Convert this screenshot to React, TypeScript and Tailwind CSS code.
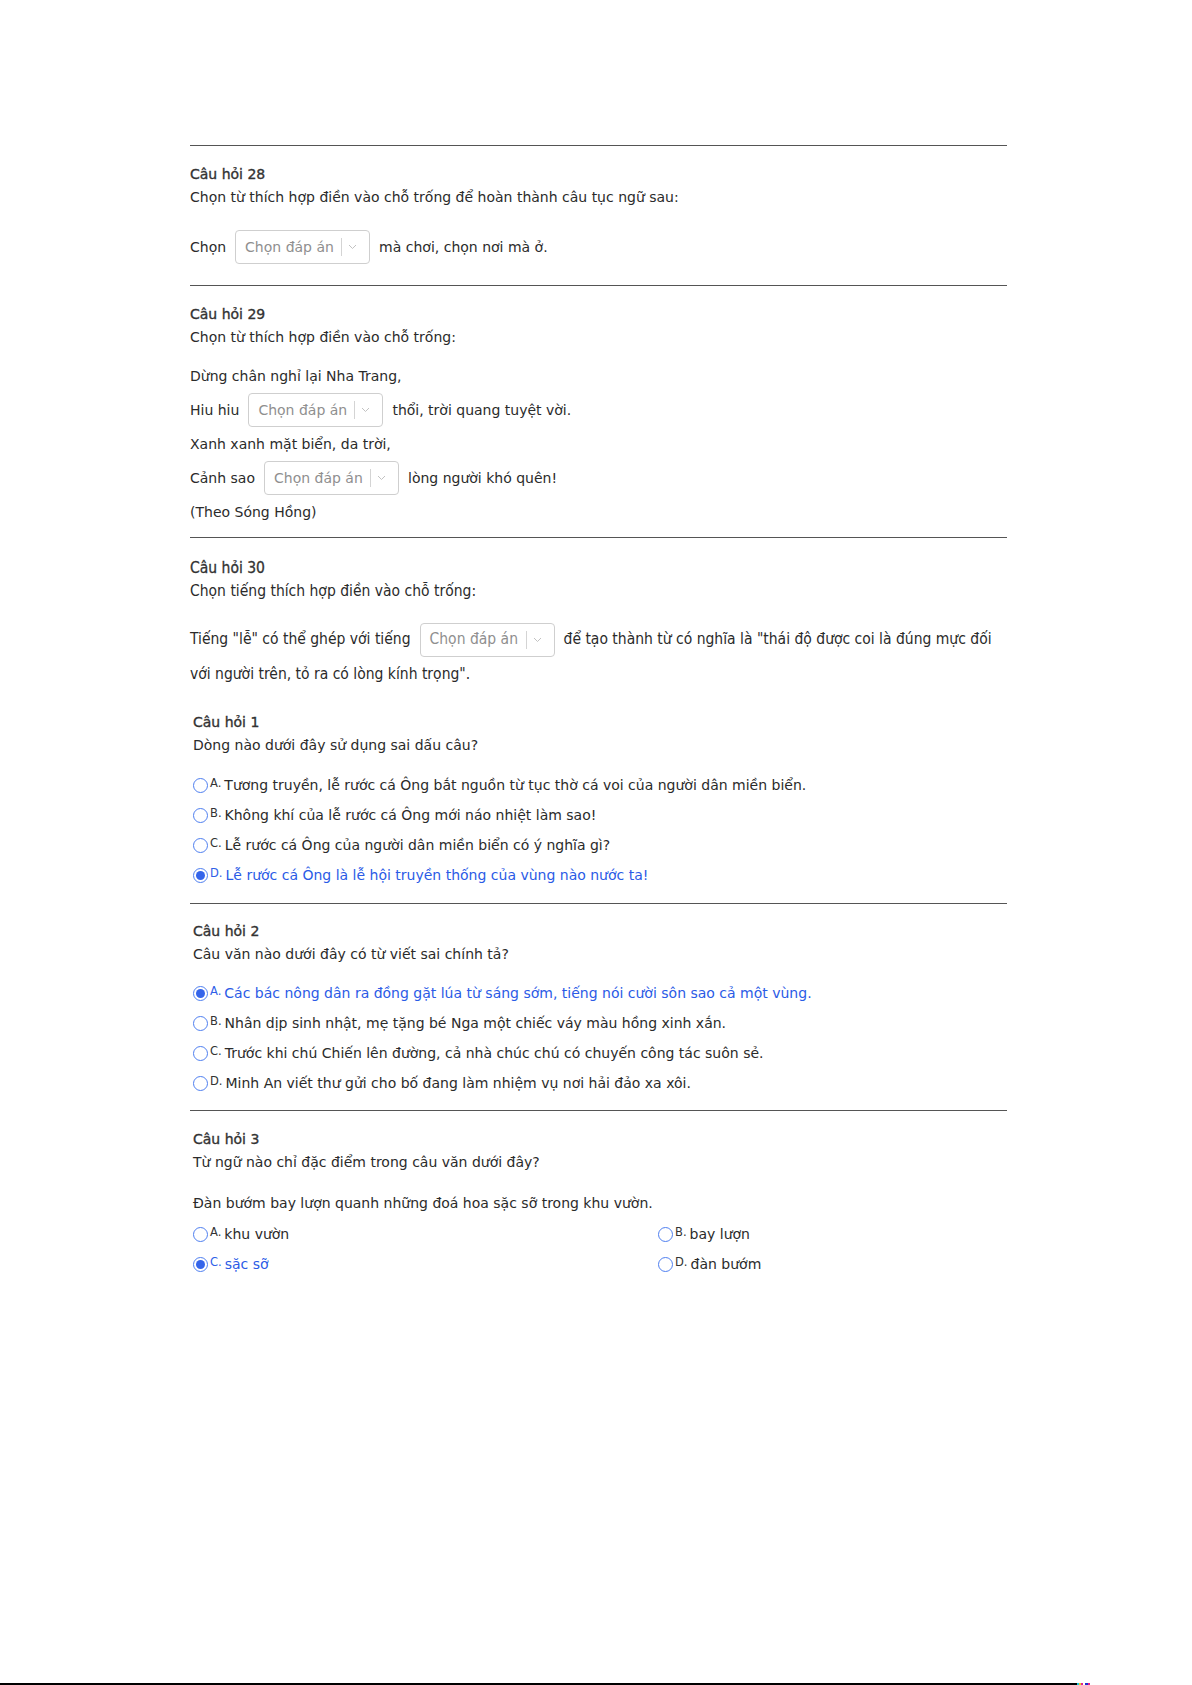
import React from "react";

type Opt = { key: string; text: string };

function Picker({ narrow }: { narrow?: boolean }) {
  return (
    <span className="mx-[9px] inline-flex h-[34px] w-[135px] items-center rounded-[4px] border border-[#cfcfcf] bg-white pl-[9px] align-middle text-[14px] leading-none text-[#8f8f8f]">
      <span className={`whitespace-nowrap ${narrow ? "w-[92px] text-[15.5px]" : "w-[88px]"}`}>Chọn đáp án</span>
      <span className={`h-[18px] w-px bg-[#d4d4d4] ${narrow ? "ml-[4px]" : "ml-[8px]"}`} />
      <svg className="ml-[6px]" width="9" height="6" viewBox="0 0 9 6" fill="none">
        <path d="M1 1l3.5 3.5L8 1" stroke="#c2c2c2" strokeWidth="1" />
      </svg>
    </span>
  );
}

function Radio({ on }: { on?: boolean }) {
  return (
    <span className="relative inline-block h-[15px] w-[15px] shrink-0 rounded-full border-[1.5px] border-[#4f7ff0] bg-white">
      {on && <span className="absolute inset-[2px] rounded-full bg-[#3565ea]" />}
    </span>
  );
}

function Option({ o, on }: { o: Opt; on?: boolean }) {
  return (
    <div className="flex h-[30px] items-center">
      <Radio on={on} />
      <span className={`ml-[2px] -mt-[3px] text-[11.5px] ${on ? "text-[#3060e8]" : "text-[#333]"}`}>{o.key}.</span>
      <span className={`ml-[3px] whitespace-nowrap ${on ? "text-[#2b5be6]" : "text-[#2b2b2b]"}`}>{o.text}</span>
    </div>
  );
}

const Heading = ({ children }: { children: React.ReactNode }) => (
  <h3 className="h-[23px] text-[14px] leading-[23px] text-[#333] [-webkit-text-stroke:0.35px_#333]">{children}</h3>
);

export default function App() {
  const q1: Opt[] = [
    { key: "A", text: "Tương truyền, lễ rước cá Ông bắt nguồn từ tục thờ cá voi của người dân miền biển." },
    { key: "B", text: "Không khí của lễ rước cá Ông mới náo nhiệt làm sao!" },
    { key: "C", text: "Lễ rước cá Ông của người dân miền biển có ý nghĩa gì?" },
    { key: "D", text: "Lễ rước cá Ông là lễ hội truyền thống của vùng nào nước ta!" },
  ];
  const q2: Opt[] = [
    { key: "A", text: "Các bác nông dân ra đồng gặt lúa từ sáng sớm, tiếng nói cười sôn sao cả một vùng." },
    { key: "B", text: "Nhân dịp sinh nhật, mẹ tặng bé Nga một chiếc váy màu hồng xinh xắn." },
    { key: "C", text: "Trước khi chú Chiến lên đường, cả nhà chúc chú có chuyến công tác suôn sẻ." },
    { key: "D", text: "Minh An viết thư gửi cho bố đang làm nhiệm vụ nơi hải đảo xa xôi." },
  ];

  return (
    <div className="flex h-[1685px] flex-col bg-white font-['DejaVu_Sans',Verdana,sans-serif] text-[14px] text-[#2b2b2b]">
      <main className="ml-[190px] w-[817px] pt-[145px]">
        {/* Câu 28 */}
        <section className="border-t border-[#555] pb-[21px] pt-[17px]">
          <Heading>Câu hỏi 28</Heading>
          <p className="leading-[23px]">Chọn từ thích hợp điền vào chỗ trống để hoàn thành câu tục ngữ sau:</p>
          <div className="mt-[21px] flex h-[34px] items-center">
            Chọn <Picker /> mà chơi, chọn nơi mà ở.
          </div>
        </section>

        {/* Câu 29 */}
        <section className="border-t border-[#555] pb-[8px] pt-[17px]">
          <Heading>Câu hỏi 29</Heading>
          <p className="leading-[23px]">Chọn từ thích hợp điền vào chỗ trống:</p>
          <div className="mt-[10px]">
            <div className="flex h-[34px] items-center">Dừng chân nghỉ lại Nha Trang,</div>
            <div className="flex h-[34px] items-center">Hiu hiu <Picker /> thổi, trời quang tuyệt vời.</div>
            <div className="flex h-[34px] items-center">Xanh xanh mặt biển, da trời,</div>
            <div className="flex h-[34px] items-center">Cảnh sao <Picker /> lòng người khó quên!</div>
            <div className="flex h-[34px] items-center">(Theo Sóng Hồng)</div>
          </div>
        </section>

        {/* Câu 30 */}
        <section className="border-t border-[#555] pt-[19px] font-['DejaVu_Sans_Condensed','DejaVu_Sans',sans-serif] text-[15.5px]">
          <h3 className="h-[23px] leading-[23px] text-[#333] [-webkit-text-stroke:0.3px_#333]">Câu hỏi 30</h3>
          <p className="leading-[23px]">Chọn tiếng thích hợp điền vào chỗ trống:</p>
          <p className="mt-[19px] leading-[34px]">
            Tiếng "lễ" có thể ghép với tiếng<Picker narrow />để tạo thành từ có nghĩa là "thái độ được coi là đúng mực đối với người trên, tỏ ra có lòng kính trọng".
          </p>
        </section>

        {/* Câu 1 */}
        <section className="pb-[12px] pl-[3px] pt-[20px]">
          <Heading>Câu hỏi 1</Heading>
          <p className="leading-[23px]">Dòng nào dưới đây sử dụng sai dấu câu?</p>
          <div className="mt-[14px]">
            {q1.map((o) => (
              <Option key={o.key} o={o} on={o.key === "D"} />
            ))}
          </div>
        </section>

        {/* Câu 2 */}
        <section className="border-t border-[#555] pb-[11px] pl-[3px] pt-[16px]">
          <Heading>Câu hỏi 2</Heading>
          <p className="leading-[23px]">Câu văn nào dưới đây có từ viết sai chính tả?</p>
          <div className="mt-[13px]">
            {q2.map((o) => (
              <Option key={o.key} o={o} on={o.key === "A"} />
            ))}
          </div>
        </section>

        {/* Câu 3 */}
        <section className="border-t border-[#555] pl-[3px] pt-[17px]">
          <Heading>Câu hỏi 3</Heading>
          <p className="leading-[23px]">Từ ngữ nào chỉ đặc điểm trong câu văn dưới đây?</p>
          <p className="mt-[18px] leading-[23px]">Đàn bướm bay lượn quanh những đoá hoa sặc sỡ trong khu vườn.</p>
          <div className="mt-[5px] grid grid-cols-[465px_1fr]">
            <Option o={{ key: "A", text: "khu vườn" }} />
            <Option o={{ key: "B", text: "bay lượn" }} />
            <Option o={{ key: "C", text: "sặc sỡ" }} on />
            <Option o={{ key: "D", text: "đàn bướm" }} />
          </div>
        </section>
      </main>

      <div className="mt-auto flex h-[2px] items-stretch">
        <span className="w-[1077px] bg-black" />
        <span className="w-[2px] bg-[#19c8e0]" />
        <span className="w-[2px] bg-[#e8d020]" />
        <span className="w-[2px] bg-[#e02090]" />
        <span className="w-[2px]" />
        <span className="w-[3px] bg-[#2030d0]" />
        <span className="w-[2px] bg-[#e02090]" />
      </div>
    </div>
  );
}
